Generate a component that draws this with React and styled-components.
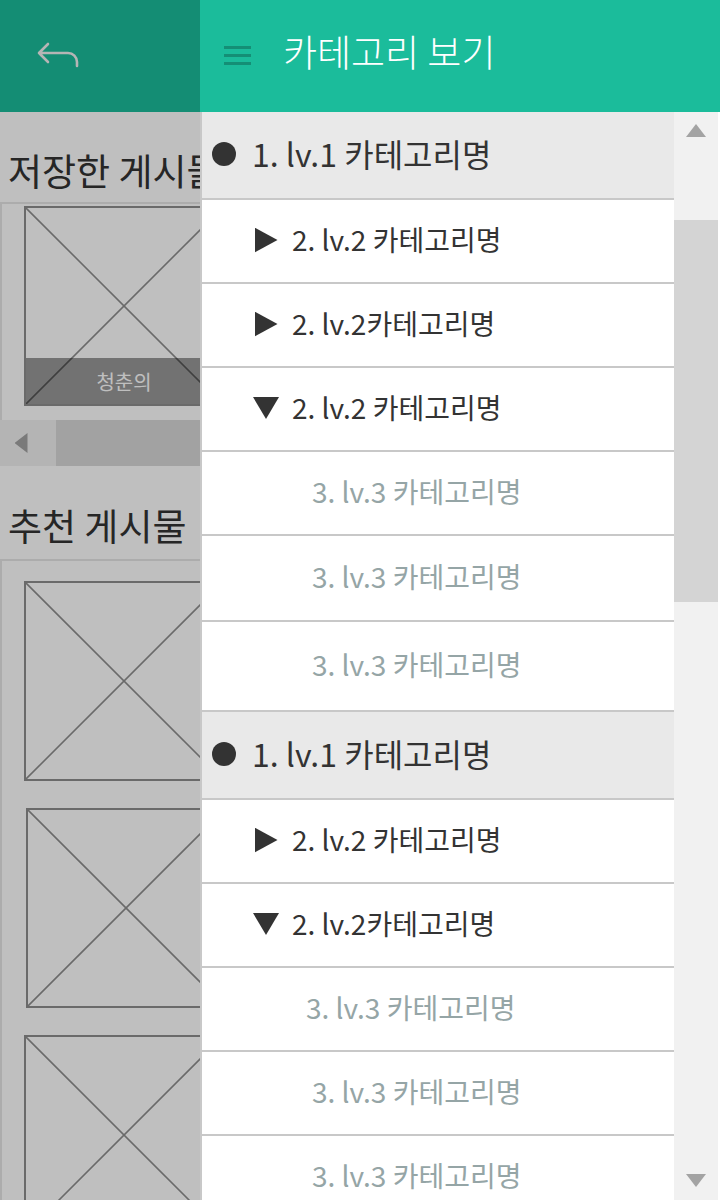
import React from "react";
import styled, { createGlobalStyle } from "styled-components";

const GlobalStyle = createGlobalStyle`
  html, body {
    margin: 0;
    padding: 0;
    background: #ffffff;
  }
  body {
    font-family: "Noto Sans CJK KR", "Noto Sans", sans-serif;
  }
  * {
    box-sizing: border-box;
  }
`;

const Screen = styled.div`
  position: relative;
  width: 720px;
  height: 1200px;
  overflow: hidden;
  background: #ffffff;
`;

/* ---------- page under the drawer ---------- */

const Page = styled.div`
  display: flex;
  flex-direction: column;
  width: 720px;
  height: 1200px;
  background: #ffffff;
`;

const PageHeader = styled.header`
  display: flex;
  align-items: center;
  height: 112px;
  padding-left: 36px;
  background: #1bbc9b;
  flex-shrink: 0;
`;

const SectionTitle = styled.h2`
  flex-shrink: 0;
  margin: ${(p) => p.$top}px 0 ${(p) => p.$bottom}px;
  padding-left: 8px;
  font-size: 37px;
  line-height: 52px;
  font-weight: 400;
  color: #333333;
  white-space: nowrap;
`;

const Shelf = styled.div`
  display: flex;
  flex-direction: ${(p) => (p.$vertical ? "column" : "row")};
  flex: ${(p) => (p.$vertical ? "1 1 auto" : "0 0 auto")};
  gap: 27px;
  min-height: 0;
  padding: ${(p) => (p.$vertical ? "20px 0 0 22px" : "2px 0 14px 22px")};
  border-top: 2px solid #e6e6e6;
  border-left: 2px solid #e6e6e6;
  overflow: hidden;
`;

const Thumb = styled.div`
  position: relative;
  flex-shrink: 0;
  width: 200px;
  height: 200px;
  margin-left: ${(p) => p.$shift || 0}px;
  border: 2px solid #8e8e8e;
  background: #ffffff;
`;

const Cross = styled.svg`
  position: absolute;
  inset: 0;
  width: 100%;
  height: 100%;
`;

const Caption = styled.div`
  position: absolute;
  left: 0;
  right: 0;
  bottom: 0;
  height: 46px;
  display: flex;
  align-items: center;
  justify-content: center;
  background: rgba(0, 0, 0, 0.4);
  color: #ffffff;
  font-size: 20px;
`;

const HScroll = styled.div`
  display: flex;
  flex-shrink: 0;
  height: 46px;
  background: #d8d8d8;
`;

const HScrollButton = styled.div`
  display: flex;
  align-items: center;
  justify-content: center;
  width: 56px;
  background: #f1f1f1;
`;

const LeftArrow = styled.span`
  width: 13px;
  height: 20px;
  margin-left: -14px;
  background: #a3a3a3;
  clip-path: polygon(100% 0, 0 50%, 100% 100%);
`;

const Dim = styled.div`
  position: absolute;
  inset: 0;
  background: rgba(0, 0, 0, 0.25);
`;

/* ---------- drawer ---------- */

const Drawer = styled.aside`
  position: absolute;
  top: 0;
  right: 0;
  width: 520px;
  height: 1200px;
  display: flex;
  flex-direction: column;
  background: #ffffff;
`;

const DrawerHeader = styled.div`
  display: flex;
  align-items: center;
  gap: 32px;
  height: 112px;
  padding: 0 0 10px 24px;
  background: #1bbc9b;
  flex-shrink: 0;
`;

const Burger = styled.div`
  display: flex;
  flex-direction: column;
  gap: 5px;
  width: 27px;
  padding-top: 8px;
`;

const BurgerBar = styled.span`
  height: 3px;
  background: #148f76;
`;

const DrawerTitle = styled.h1`
  margin: 0;
  font-size: 37px;
  font-weight: 300;
  color: #ffffff;
`;

const DrawerBody = styled.div`
  display: flex;
  flex: 1;
  min-height: 0;
  padding-right: 2px;
`;

const List = styled.ul`
  flex: 1;
  margin: 0;
  padding: 0;
  list-style: none;
  border-left: 2px solid #c8c8c8;
  overflow: hidden;
`;

const Row = styled.li`
  display: flex;
  align-items: center;
  height: ${(p) => p.$h + 2}px;
  padding-left: ${(p) => p.$indent}px;
  padding-bottom: 5px;
  border-bottom: 2px solid #c8c8c8;
  background: ${(p) => (p.$level === 1 ? "#e9e9e9" : "#ffffff")};
  color: ${(p) => (p.$level === 3 ? "#95a5a6" : "#333333")};
  font-size: ${(p) => (p.$level === 1 ? 32 : 28)}px;
  white-space: nowrap;
`;

const Dot = styled.span`
  width: 24px;
  height: 24px;
  margin: 3px 16px 0 0;
  border-radius: 50%;
  background: #333333;
`;

const Caret = styled.span`
  display: flex;
  align-items: center;
  justify-content: center;
  width: 26px;
  height: 26px;
  margin: 3px 13px 0 0;

  &::before {
    content: "";
    width: ${(p) => (p.$open ? 26 : 23)}px;
    height: ${(p) => (p.$open ? 22 : 25)}px;
    background: #333333;
    clip-path: ${(p) =>
      p.$open
        ? "polygon(0 0, 100% 0, 50% 100%)"
        : "polygon(0 0, 100% 50%, 0 100%)"};
  }
`;

const VScroll = styled.div`
  display: flex;
  flex-direction: column;
  align-items: center;
  width: 44px;
  background: #f1f1f1;
`;

const ScrollArrow = styled.span`
  width: 20px;
  height: 13px;
  margin: ${(p) => (p.$down ? "auto 0 13px" : "12px 0 0")};
  background: #a3a3a3;
  clip-path: ${(p) =>
    p.$down
      ? "polygon(0 0, 100% 0, 50% 100%)"
      : "polygon(50% 0, 100% 100%, 0 100%)"};
`;

const ScrollThumb = styled.span`
  align-self: stretch;
  height: 382px;
  margin-top: 83px;
  background: #d4d4d4;
`;

const categories = [
  { level: 1, text: "1. lv.1 카테고리명", h: 86 },
  { level: 2, text: "2. lv.2 카테고리명", h: 82 },
  { level: 2, text: "2. lv.2카테고리명", h: 82 },
  { level: 2, text: "2. lv.2 카테고리명", h: 82, open: true },
  { level: 3, text: "3. lv.3 카테고리명", h: 82 },
  { level: 3, text: "3. lv.3 카테고리명", h: 84 },
  { level: 3, text: "3. lv.3 카테고리명", h: 88 },
  { level: 1, text: "1. lv.1 카테고리명", h: 86 },
  { level: 2, text: "2. lv.2 카테고리명", h: 82 },
  { level: 2, text: "2. lv.2카테고리명", h: 82, open: true },
  { level: 3, text: "3. lv.3 카테고리명", h: 82, indent: 104 },
  { level: 3, text: "3. lv.3 카테고리명", h: 82 },
  { level: 3, text: "3. lv.3 카테고리명", h: 82 },
];

const indents = { 1: 10, 2: 51, 3: 110 };

function BackIcon() {
  return (
    <svg width="44" height="28" viewBox="0 0 44 28" fill="none">
      <path
        d="M12 2 L3 11 L12 20 M3 11 H32 A9 9 0 0 1 41 20 V24"
        stroke="#f2f2f2"
        strokeWidth="2.6"
        strokeLinecap="round"
        strokeLinejoin="round"
      />
    </svg>
  );
}

function Placeholder({ caption, shift }) {
  return (
    <Thumb $shift={shift}>
      <Cross viewBox="0 0 100 100" preserveAspectRatio="none">
        <line x1="0" y1="0" x2="100" y2="100" stroke="#8e8e8e" strokeWidth="1.6" vectorEffect="non-scaling-stroke" />
        <line x1="100" y1="0" x2="0" y2="100" stroke="#8e8e8e" strokeWidth="1.6" vectorEffect="non-scaling-stroke" />
      </Cross>
      {caption && <Caption>{caption}</Caption>}
    </Thumb>
  );
}

export default function App() {
  return (
    <Screen>
      <GlobalStyle />
      <Page>
        <PageHeader>
          <BackIcon />
        </PageHeader>
        <SectionTitle $top={32} $bottom={6}>저장한 게시물</SectionTitle>
        <Shelf>
          <Placeholder caption="청춘의" />
          <Placeholder />
          <Placeholder />
        </Shelf>
        <HScroll>
          <HScrollButton>
            <LeftArrow />
          </HScrollButton>
        </HScroll>
        <SectionTitle $top={33} $bottom={8}>추천 게시물</SectionTitle>
        <Shelf $vertical>
          <Placeholder />
          <Placeholder shift={2} />
          <Placeholder />
        </Shelf>
      </Page>
      <Dim />
      <Drawer>
        <DrawerHeader>
          <Burger>
            <BurgerBar />
            <BurgerBar />
            <BurgerBar />
          </Burger>
          <DrawerTitle>카테고리 보기</DrawerTitle>
        </DrawerHeader>
        <DrawerBody>
          <List>
            {categories.map((c, i) => (
              <Row key={i} $level={c.level} $h={c.h} $indent={c.indent || indents[c.level]}>
                {c.level === 1 && <Dot />}
                {c.level === 2 && <Caret $open={c.open} />}
                {c.text}
              </Row>
            ))}
          </List>
          <VScroll>
            <ScrollArrow />
            <ScrollThumb />
            <ScrollArrow $down />
          </VScroll>
        </DrawerBody>
      </Drawer>
    </Screen>
  );
}
